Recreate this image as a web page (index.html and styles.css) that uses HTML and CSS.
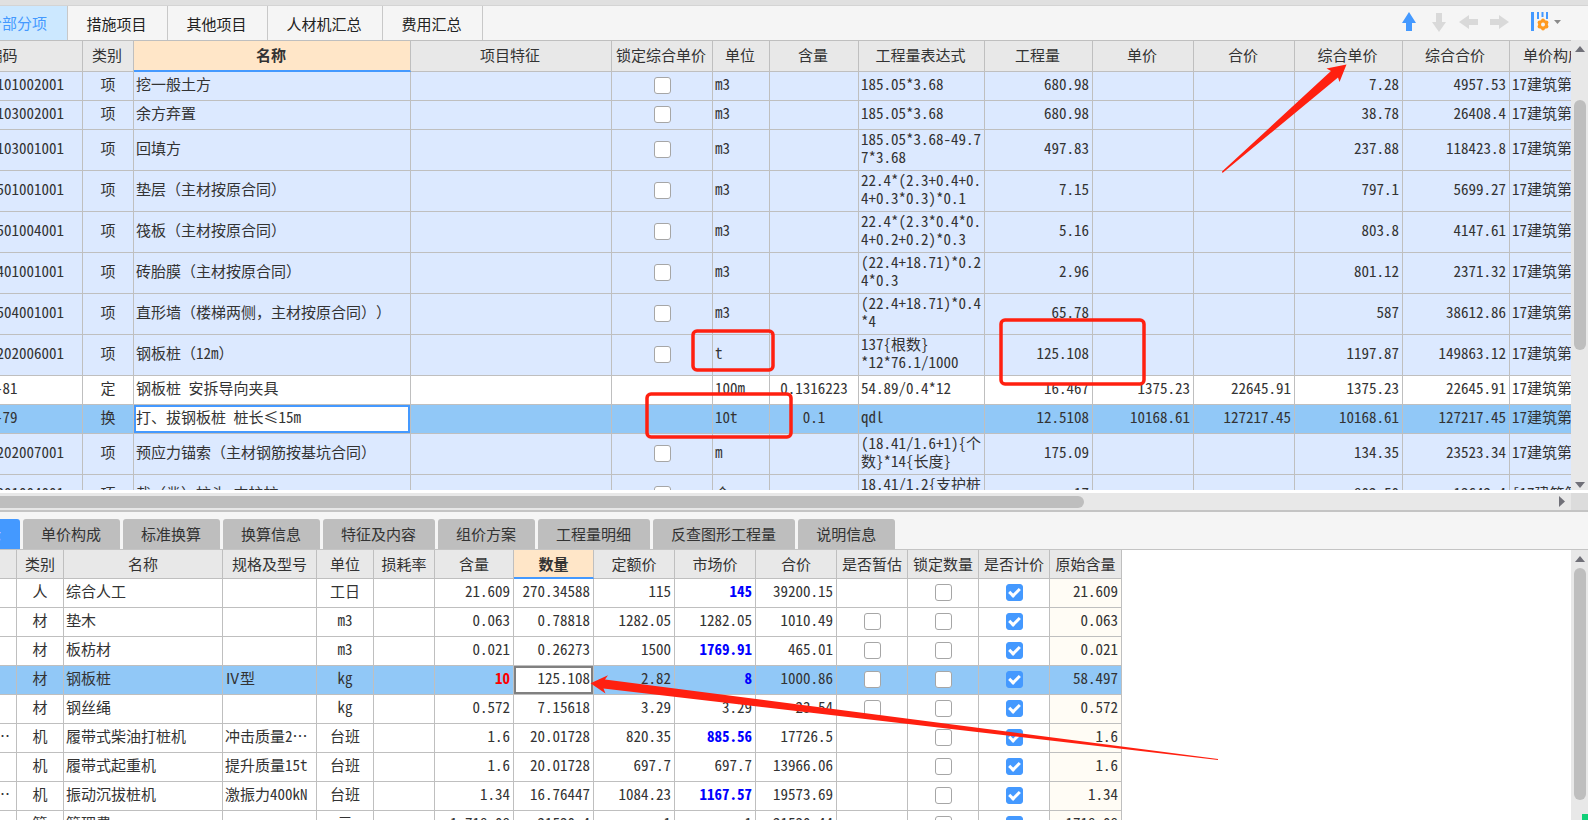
FILE: index.html
```
<!DOCTYPE html>
<html lang="zh-CN">
<head>
<meta charset="utf-8">
<title>分部分项</title>
<link rel="stylesheet" href="styles.css">
</head>
<body>
<div class="app">
  <div class="strip"></div>
  <header class="bar">
    <nav class="tabs">
      <button class="tab tab-on">分部分项</button>
      <button class="tab">措施项目</button>
      <button class="tab">其他项目</button>
      <button class="tab tab-wide">人材机汇总</button>
      <button class="tab">费用汇总</button>
    </nav>
    <div class="tools">
      <button class="tool" aria-label="上移"><svg width="20" height="20" viewBox="0 0 20 20"><path d="M10 0 17 11H13V19H7V11H3Z" fill="#4499ff"/></svg></button>
      <button class="tool" aria-label="下移"><svg width="20" height="20" viewBox="0 0 20 20"><path d="M7 1H13V10H17L10 20 3 10H7Z" fill="#d9d9d9"/></svg></button>
      <button class="tool" aria-label="左移"><svg width="20" height="20" viewBox="0 0 20 20"><path d="M0 10 10 3V7H19V13H10V17Z" fill="#d9d9d9"/></svg></button>
      <button class="tool" aria-label="右移"><svg width="20" height="20" viewBox="0 0 20 20"><path d="M20 10 10 3V7H1V13H10V17Z" fill="#d9d9d9"/></svg></button>
      <button class="tool tool-set" aria-label="列设置"><svg width="30" height="20" viewBox="0 0 30 20"><path d="M0 0H3V19H0ZM6 0H8V7H6ZM10.500 0H12.500V5H10.500ZM15 0H17V7H15Z" fill="#4499ff"/><g fill="#ff9a1f"><circle cx="12" cy="12.500" r="4.800"/><circle cx="12" cy="8.500" r="1.900"/><circle cx="12" cy="16.500" r="1.900"/><circle cx="8.500" cy="10.500" r="1.900"/><circle cx="15.500" cy="10.500" r="1.900"/><circle cx="8.500" cy="14.500" r="1.900"/><circle cx="15.500" cy="14.500" r="1.900"/></g><circle cx="12" cy="12.500" r="2" fill="#f5f5f5"/><path d="M23 8H30L26.500 12Z" fill="#8a8a8a"/></svg></button>
    </div>
  </header>

  <section class="pane pane-top">
    <div class="view">
      <table class="grid grid-top">
        <colgroup><col class="w158"><col class="w51"><col class="w277"><col class="w201"><col class="w101"><col class="w57"><col class="w89"><col class="w126"><col class="w108"><col class="w101"><col class="w101"><col class="w108"><col class="w107"><col class="w119"></colgroup>
        <thead><tr><th>编码<th>类别<th class="cur">名称<th>项目特征<th>锁定综合单价<th>单位<th>含量<th>工程量表达式<th>工程量<th>单价<th>合价<th>综合单价<th>综合合价<th>单价构成文件</tr></thead>
        <tbody>
          <tr><td class="code">010101002001<td class="c">项<td>挖一般土方<td><td class="c"><input type="checkbox" aria-label="锁定"><td>m3<td><td>185.05*3.68<td class="r">680.98<td><td><td class="r">7.28<td class="r">4957.53<td>17建筑第</tr>
          <tr><td class="code">010103002001<td class="c">项<td>余方弃置<td><td class="c"><input type="checkbox" aria-label="锁定"><td>m3<td><td>185.05*3.68<td class="r">680.98<td><td><td class="r">38.78<td class="r">26408.4<td>17建筑第</tr>
          <tr class="tall"><td class="code">010103001001<td class="c">项<td>回填方<td><td class="c"><input type="checkbox" aria-label="锁定"><td>m3<td><td>185.05*3.68-49.7<br>7*3.68<td class="r">497.83<td><td><td class="r">237.88<td class="r">118423.8<td>17建筑第</tr>
          <tr class="tall"><td class="code">010501001001<td class="c">项<td class="full">垫层（主材按原合同）<td><td class="c"><input type="checkbox" aria-label="锁定"><td>m3<td><td>22.4*(2.3+0.4+0.<br>4+0.3*0.3)*0.1<td class="r">7.15<td><td><td class="r">797.1<td class="r">5699.27<td>17建筑第</tr>
          <tr class="tall"><td class="code">010501004001<td class="c">项<td class="full">筏板（主材按原合同）<td><td class="c"><input type="checkbox" aria-label="锁定"><td>m3<td><td>22.4*(2.3*0.4*0.<br>4+0.2+0.2)*0.3<td class="r">5.16<td><td><td class="r">803.8<td class="r">4147.61<td>17建筑第</tr>
          <tr class="tall"><td class="code">010401001001<td class="c">项<td class="full">砖胎膜（主材按原合同）<td><td class="c"><input type="checkbox" aria-label="锁定"><td>m3<td><td>(22.4+18.71)*0.2<br>4*0.3<td class="r">2.96<td><td><td class="r">801.12<td class="r">2371.32<td>17建筑第</tr>
          <tr class="tall"><td class="code">010504001001<td class="c">项<td class="full">直形墙（楼梯两侧，主材按原合同））<td><td class="c"><input type="checkbox" aria-label="锁定"><td>m3<td><td>(22.4+18.71)*0.4<br>*4<td class="r">65.78<td><td><td class="r">587<td class="r">38612.86<td>17建筑第</tr>
          <tr class="tall"><td class="code">010202006001<td class="c">项<td class="full">钢板桩（<span class="half">12m</span>）<td><td class="c"><input type="checkbox" aria-label="锁定"><td>t<td><td>137{根数}<br>*12*76.1/1000<td class="r">125.108<td><td><td class="r">1197.87<td class="r">149863.12<td>17建筑第</tr>
          <tr class="plain"><td class="code sub">A3-81<td class="c">定<td>钢板桩 安拆导向夹具<td><td><td>100m<td class="c">0.1316223<td>54.89/0.4*12<td class="r">16.467<td class="r">1375.23<td class="r">22645.91<td class="r">1375.23<td class="r">22645.91<td>17建筑第</tr>
          <tr class="sel"><td class="code sub">A3-79<td class="c">换<td class="edit">打、拔钢板桩 桩长≤15m<td><td><td>10t<td class="c">0.1<td>qdl<td class="r">12.5108<td class="r">10168.61<td class="r">127217.45<td class="r">10168.61<td class="r">127217.45<td>17建筑第</tr>
          <tr class="tall"><td class="code">010202007001<td class="c">项<td class="full">预应力锚索（主材钢筋按基坑合同）<td><td class="c"><input type="checkbox" aria-label="锁定"><td>m<td><td>(18.41/1.6+1){个<br>数}*14{长度}<td class="r">175.09<td><td><td class="r">134.35<td class="r">23523.34<td>17建筑第</tr>
          <tr class="tall"><td class="code">010301004001<td class="c">项<td>截<span class="full">（凿）</span>桩头 支护桩<td><td class="c"><input type="checkbox" aria-label="锁定"><td>个<td><td>18.41/1.2{支护桩<br>根数}<td class="r">17<td><td><td class="r">802.50<td class="r">13642.4<td>[17建筑第</tr>
        </tbody>
      </table>
    </div>
    <div class="vbar">
      <svg class="arr" width="10" height="6" viewBox="0 0 10 6"><path d="M0 6 5 0 10 6Z"/></svg>
      <div class="track"><div class="thumb thumb-top"></div></div>
      <svg class="arr" width="10" height="6" viewBox="0 0 10 6"><path d="M0 0 5 6 10 0Z"/></svg>
    </div>
  </section>
  <div class="hbar">
    <div class="hthumb"></div>
    <svg class="harr" width="6" height="11" viewBox="0 0 6 11"><path d="M0 0 6 5.500 0 11Z"/></svg>
    <div class="corner"></div>
  </div>

  <nav class="subtabs">
    <button class="sub-tab sub-on">工料机显示</button>
    <button class="sub-tab">单价构成</button>
    <button class="sub-tab">标准换算</button>
    <button class="sub-tab">换算信息</button>
    <button class="sub-tab">特征及内容</button>
    <button class="sub-tab">组价方案</button>
    <button class="sub-tab">工程量明细</button>
    <button class="sub-tab">反查图形工程量</button>
    <button class="sub-tab">说明信息</button>
  </nav>

  <section class="pane pane-low">
    <div class="view">
      <table class="grid grid-low">
        <colgroup><col class="w17"><col class="w47"><col class="w159"><col class="w94"><col class="w57"><col class="w61"><col class="w79"><col class="w80"><col class="w81"><col class="w81"><col class="w81"><col class="w71"><col class="w71"><col class="w71"><col class="w72"></colgroup>
        <thead><tr><th><th>类别<th>名称<th>规格及型号<th>单位<th>损耗率<th>含量<th class="cur">数量<th>定额价<th>市场价<th>合价<th>是否暂估<th>锁定数量<th>是否计价<th>原始含量</tr></thead>
        <tbody>
          <tr><td><td class="c">人<td>综合人工<td><td class="c">工日<td><td class="r">21.609<td class="r">270.34588<td class="r">115<td class="r blue">145<td class="r">39200.15<td><td class="c"><input type="checkbox" aria-label="锁定数量"><td class="c"><input type="checkbox" aria-label="是否计价" checked><td class="r orig">21.609</tr>
          <tr><td><td class="c">材<td>垫木<td><td class="c">m3<td><td class="r">0.063<td class="r">0.78818<td class="r">1282.05<td class="r">1282.05<td class="r">1010.49<td class="c"><input type="checkbox" aria-label="是否暂估"><td class="c"><input type="checkbox" aria-label="锁定数量"><td class="c"><input type="checkbox" aria-label="是否计价" checked><td class="r orig">0.063</tr>
          <tr><td><td class="c">材<td>板枋材<td><td class="c">m3<td><td class="r">0.021<td class="r">0.26273<td class="r">1500<td class="r blue">1769.91<td class="r">465.01<td class="c"><input type="checkbox" aria-label="是否暂估"><td class="c"><input type="checkbox" aria-label="锁定数量"><td class="c"><input type="checkbox" aria-label="是否计价" checked><td class="r orig">0.021</tr>
          <tr class="sel"><td><td class="c">材<td>钢板桩<td>Ⅳ型<td class="c">kg<td><td class="r red">10<td class="r focus">125.108<td class="r">2.82<td class="r blue">8<td class="r">1000.86<td class="c"><input type="checkbox" aria-label="是否暂估"><td class="c"><input type="checkbox" aria-label="锁定数量"><td class="c"><input type="checkbox" aria-label="是否计价" checked><td class="r orig">58.497</tr>
          <tr><td><td class="c">材<td>钢丝绳<td><td class="c">kg<td><td class="r">0.572<td class="r">7.15618<td class="r">3.29<td class="r">3.29<td class="r">23.54<td class="c"><input type="checkbox" aria-label="是否暂估"><td class="c"><input type="checkbox" aria-label="锁定数量"><td class="c"><input type="checkbox" aria-label="是否计价" checked><td class="r orig">0.572</tr>
          <tr><td class="dots">⋯<td class="c">机<td>履带式柴油打桩机<td>冲击质量2⋯<td class="c">台班<td><td class="r">1.6<td class="r">20.01728<td class="r">820.35<td class="r blue">885.56<td class="r">17726.5<td><td class="c"><input type="checkbox" aria-label="锁定数量"><td class="c"><input type="checkbox" aria-label="是否计价" checked><td class="r orig">1.6</tr>
          <tr><td><td class="c">机<td>履带式起重机<td>提升质量15t<td class="c">台班<td><td class="r">1.6<td class="r">20.01728<td class="r">697.7<td class="r">697.7<td class="r">13966.06<td><td class="c"><input type="checkbox" aria-label="锁定数量"><td class="c"><input type="checkbox" aria-label="是否计价" checked><td class="r orig">1.6</tr>
          <tr><td class="dots">⋯<td class="c">机<td>振动沉拔桩机<td>激振力400kN<td class="c">台班<td><td class="r">1.34<td class="r">16.76447<td class="r">1084.23<td class="r blue">1167.57<td class="r">19573.69<td><td class="c"><input type="checkbox" aria-label="锁定数量"><td class="c"><input type="checkbox" aria-label="是否计价" checked><td class="r orig">1.34</tr>
          <tr><td><td class="c">管<td>管理费<td><td class="c">元<td><td class="r">1.718.08<td class="r">21530.4<td class="r">1<td class="r">1<td class="r">21530.44<td><td class="c"><input type="checkbox" aria-label="锁定数量"><td class="c"><input type="checkbox" aria-label="是否计价" checked><td class="r orig">1718.08</tr>
        </tbody>
      </table>
    </div>
    <div class="vbar">
      <svg class="arr" width="10" height="6" viewBox="0 0 10 6"><path d="M0 6 5 0 10 6Z"/></svg>
      <div class="track"><div class="thumb thumb-low"></div></div>
      <div class="dot"></div>
    </div>
  </section>

  <svg class="marks" width="1588" height="820" viewBox="0 0 1588 820" aria-hidden="true">
    <g fill="none" stroke="#ff2010" stroke-width="3.500">
      <rect x="693" y="331" width="80" height="39" rx="4"/>
      <rect x="647" y="394" width="144" height="43" rx="4"/>
      <rect x="1001" y="320" width="143" height="64" rx="4"/>
    </g>
    <g fill="#ff2010">
      <path d="M1346.500 64.500 1326.500 68.500 1331 71 1222 171.500 1222.500 173 1338 77.500 1339.500 82Z"/>
      <path d="M590.500 683.300 608 675.300 605 679.500 1218 759 1218 760 603.500 688.500 605.500 693.500Z"/>
    </g>
  </svg>
</div>
</body>
</html>
```
FILE: styles.css
```
* { box-sizing: border-box; }

body {
  margin: 0;
  background: #fff;
  color: #333;
  font: 15px/18px "Noto Sans CJK SC", sans-serif;
  font-feature-settings: "hwid";
}

button {
  border: 0;
  padding: 0;
  background: none;
  color: inherit;
  font: inherit;
  white-space: nowrap;
}

.full {
  font-feature-settings: normal;
  text-spacing-trim: space-all;
}

.half { font-feature-settings: "hwid"; }

.app {
  position: relative;
  display: flex;
  flex-direction: column;
  height: 100vh;
  overflow: hidden;
}

.marks {
  position: absolute;
  top: 0;
  left: 0;
  pointer-events: none;
}

.strip {
  flex: none;
  height: 6px;
  background: #e0e0e0;
  border-bottom: 1px solid #d4d4d4;
}

.bar {
  flex: none;
  display: flex;
  justify-content: space-between;
  height: 34px;
  background: #f5f5f5;
}

.tabs {
  display: flex;
  margin-left: -35px;
}

.tab {
  width: 100px;
  border-right: 1px solid #c8c8c8;
  padding: 2px 2px 0 0;
  color: #222;
}

.tab-wide { width: 115px; }

.tab-on {
  width: 103px;
  padding: 0 20px 0 0;
  background: #cce8ff;
  color: #4499ff;
  text-align: right;
}

.tools {
  display: flex;
  align-items: center;
  gap: 10px;
  padding: 0 27px 2px 0;
}

.tool svg { display: block; }
.tool-set { margin-left: 12px; }

.pane {
  display: flex;
  overflow: hidden;
}

.pane-top {
  flex: none;
  height: 453px;
  border-bottom: 3px solid #fff;
}

.pane-low {
  flex: 1;
  min-height: 0;
}

.view {
  flex: 1;
  min-width: 0;
  overflow: hidden;
}

.grid {
  border-collapse: separate;
  border-spacing: 0;
  table-layout: fixed;
  border-top: 1px solid #bfbfbf;
}

.grid-top { width: 1704px; margin-left: -75px; }
.grid-low { width: 1122px; border-top: 0; }

.w17 { width: 17px; }
.w47 { width: 47px; }
.w51 { width: 51px; }
.w57 { width: 57px; }
.w61 { width: 61px; }
.w71 { width: 71px; }
.w72 { width: 72px; }
.w79 { width: 79px; }
.w80 { width: 80px; }
.w81 { width: 81px; }
.w89 { width: 89px; }
.w94 { width: 94px; }
.w101 { width: 101px; }
.w107 { width: 107px; }
.w108 { width: 108px; }
.w119 { width: 119px; }
.w126 { width: 126px; }
.w158 { width: 158px; }
.w159 { width: 159px; }
.w201 { width: 201px; }
.w277 { width: 277px; }

.grid th,
.grid td {
  height: 29px;
  border-right: 1px solid #bfbfbf;
  border-bottom: 1px solid #bfbfbf;
  padding: 0 3px 4px 2px;
  text-align: left;
  vertical-align: middle;
  white-space: nowrap;
}

.grid th {
  background: #e8e8e8;
  padding: 0 2px 2px 0;
  font-weight: 400;
  text-align: center;
}

.grid-top th { height: 31px; }

.grid .cur {
  background: #ffe6c8;
  border-bottom: 2px solid #4499ff;
  font-weight: 700;
}

.grid-low th,
.grid-low .cur { padding: 0; }

.grid-top td { background: #dce9ff; }
.grid-top .tall td { height: 41px; }
.grid-top .plain td { background: #fff; }
.grid .sel td { background: #91c8f7; }
.grid .c { padding: 0 0 4px; text-align: center; }
.grid .r { text-align: right; }
.grid .code { padding-left: 49px; }
.grid .sub { padding-left: 55px; }
.grid .dots { padding: 0 7px 4px 0; direction: rtl; overflow: hidden; }
.grid .blue { color: #00f; font-weight: 700; }
.grid .red { color: #f00; font-weight: 700; }
.grid .orig { background: #fffcf5; }

.grid .sel .edit {
  background: #fff;
  box-shadow: inset 0 0 0 2px #4499ff;
}

.grid .sel .focus {
  background: #fff;
  box-shadow: inset 0 0 0 2px #808080;
}

input[type="checkbox"] {
  appearance: none;
  display: block;
  width: 17px;
  height: 17px;
  margin: 3px auto 0;
  border: 1px solid #a6a6a6;
  border-radius: 3px;
  background: #fff;
}

input[type="checkbox"]:checked {
  border-color: #4499ff;
  background: #4499ff;
}

input[type="checkbox"]:checked::after {
  content: "";
  display: block;
  box-sizing: border-box;
  width: 11px;
  height: 7px;
  margin: 3px 0 0 2px;
  border: solid #fff;
  border-width: 0 0 3px 3px;
  transform: rotate(-45deg);
}

.vbar {
  flex: none;
  display: flex;
  flex-direction: column;
  align-items: center;
  width: 17px;
  padding: 6px 0 2px;
  background: #e8e8e8;
}

.arr,
.harr {
  flex: none;
  fill: #707078;
}

.track {
  flex: 1;
  width: 12px;
}

.thumb {
  border-radius: 6px;
  background: #bebebe;
}

.thumb-top { height: 250px; margin-top: 48px; }
.thumb-low { height: 232px; margin-top: 6px; }

.dot {
  align-self: flex-end;
  width: 6px;
  height: 6px;
  margin-bottom: -2px;
  background: #10d078;
}

.hbar {
  flex: none;
  display: flex;
  align-items: center;
  height: 19px;
  border-bottom: 2px solid #c4c4c4;
  background: #e8e8e8;
}

.hthumb {
  width: 1084px;
  height: 12px;
  border-radius: 0 6px 6px 0;
  background: #bebebe;
}

.harr {
  margin: 0 6px 0 auto;
}

.corner {
  width: 17px;
  height: 17px;
  background: #dcdcdc;
}

.subtabs {
  flex: none;
  display: flex;
  gap: 3px;
  margin-left: -92px;
  padding-top: 7px;
  height: 38px;
  background: #f5f5f5;
  border-bottom: 1px solid #c4c4c4;
}

.sub-tab {
  padding: 0 19px 1px 18px;
  border-radius: 3px 3px 0 0;
  background: #bebebe;
}

.sub-on {
  background: #4499ff;
  color: #fff;
}
```
